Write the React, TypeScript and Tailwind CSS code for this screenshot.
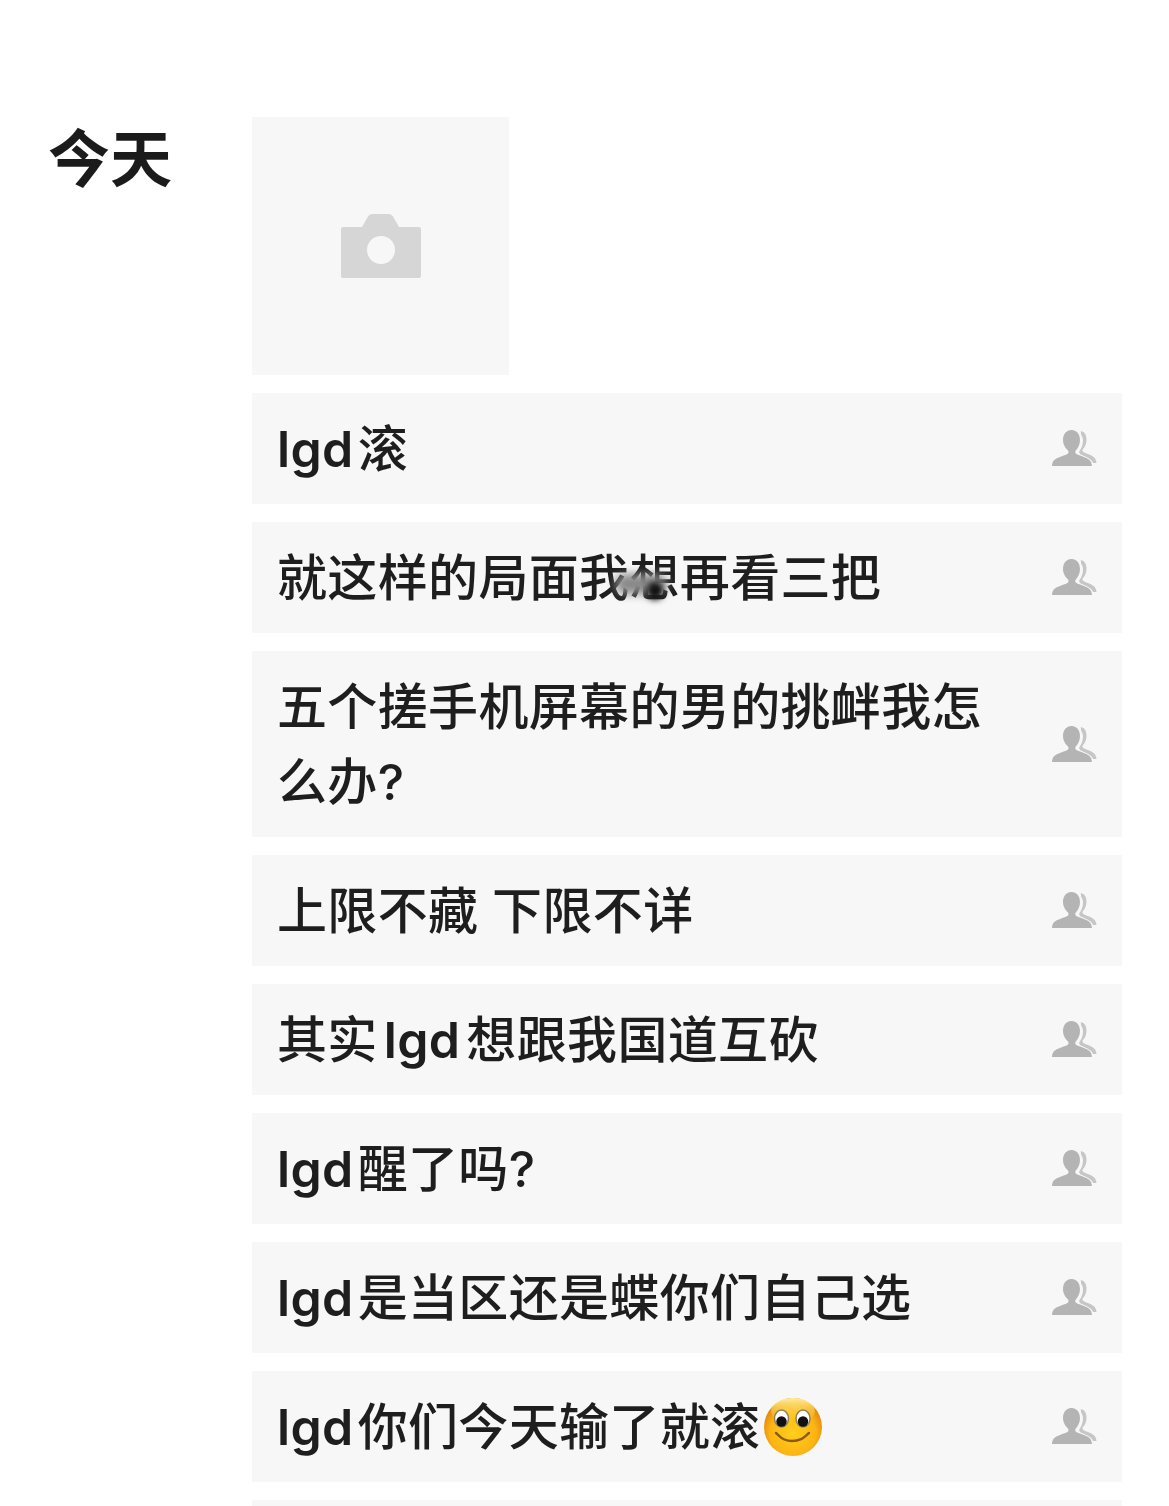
import type { ReactNode } from "react";

function CameraIcon() {
  return (
    <svg width="80" height="64" viewBox="0 0 80 64" className="block">
      <path
        d="M2 13h19l6-10.500q1.500-2.500 4-2.500h17q2.500 0 4 2.500l6 10.500h20q2 0 2 2v47q0 2-2 2H2q-2 0-2-2V15q0-2 2-2z"
        fill="#d6d6d6"
      />
      <circle cx="40" cy="36" r="14" fill="#f7f7f7" />
    </svg>
  );
}

function FriendsIcon() {
  return (
    <svg width="45" height="37" viewBox="0 0 45 37" className="block shrink-0">
      <path
        d="M28 1c4 0 6.500 3.500 6.500 8.500 0 4-1.500 7.500-3.500 9.500-.8 1-.6 2.500.6 3.200 3 1.600 9.500 3 11.500 6.300.8 1.300 1.200 3 1.400 4.500h-3.500c-1-3.600-5.500-5.500-10-7.500-2.500-1-4.500-2.400-3.500-4.500 2-3 3.500-6 3.500-10.500 0-2.500-.8-4.500-2-6 0-1.800-.2-2.600 0-3.500z"
        fill="#c6c6c6"
      />
      <path
        d="M19.500 0c5.200 0 8.500 4.300 8.500 10 0 4.500-2 8.300-4.200 10.500-1 1.300-.7 3 1 3.700 4 1.800 10.500 3.300 13.200 6.300 1.300 1.500 1.800 3.700 1.900 5.500H0c.1-2 .5-4 1.800-5.500 2.700-3 9.200-4.500 13.200-6.300 1.700-.8 2-2.400 1-3.700C13.500 18.300 11 14.500 11 10c0-5.700 3.300-10 8.500-10z"
        fill="#b4b4b4"
      />
    </svg>
  );
}

function SmileEmoji() {
  return (
    <svg width="60" height="60" viewBox="0 0 60 60" className="ml-[3px] inline-block align-[-12px]">
      <defs>
        <radialGradient id="smile-face" cx="50%" cy="60%" r="56%">
          <stop offset="0%" stopColor="#ffcf1c" />
          <stop offset="70%" stopColor="#fcb414" />
          <stop offset="100%" stopColor="#e3860f" />
        </radialGradient>
        <linearGradient id="smile-shine" x1="0" y1="0" x2="0" y2="1">
          <stop offset="0%" stopColor="#fff0a0" />
          <stop offset="100%" stopColor="#ffd21f" stopOpacity="0" />
        </linearGradient>
      </defs>
      <circle cx="30" cy="30" r="29" fill="url(#smile-face)" />
      <ellipse cx="30" cy="14" rx="22" ry="13" fill="url(#smile-shine)" />
      <ellipse cx="18.500" cy="21.500" rx="7" ry="8.500" fill="#fff" stroke="#8f8158" strokeWidth="1.500" />
      <ellipse cx="40" cy="21.500" rx="7" ry="8.500" fill="#fff" stroke="#8f8158" strokeWidth="1.500" />
      <circle cx="18.500" cy="24.500" r="5.200" fill="#111" />
      <circle cx="40" cy="24.500" r="5.200" fill="#111" />
      <path d="M13 36c3 2 5 8 16 8 10 0 13-5 17-8" fill="none" stroke="#8a5a12" strokeWidth="2.400" strokeLinecap="round" />
    </svg>
  );
}

function Row({ children }: { children: ReactNode }) {
  return (
    <div className="relative flex shrink-0 items-center justify-between bg-[#f7f7f7] py-[18px] pl-[25px] pr-[25px]">
      <div className="w-[713px] translate-y-px text-[50px] font-medium leading-[75px] tracking-[0.35px] text-[#1e1e1e]">
        {children}
      </div>
      <FriendsIcon />
    </div>
  );
}

// the source app leaves a thin gap around latin runs in chinese text
function Lgd({ lead = false }: { lead?: boolean }) {
  return <span className={lead ? "ml-[6px] mr-[6px] font-semibold" : "mr-[4px] font-semibold"}>lgd</span>;
}

export default function App() {
  return (
    <div
      className="flex h-[1506px] overflow-hidden bg-white pt-[117px]"
      style={{ fontFamily: '"Inter", "Noto Sans CJK SC", sans-serif' }}
    >
      <div className="w-[252px] shrink-0 pl-[48px] pt-[12px] text-[62px] font-bold leading-[62px] text-[#1b1b1b]">
        今天
      </div>
      <div className="flex w-[870px] flex-col gap-[18px]">
        <div className="flex h-[258px] w-[257px] shrink-0 items-center justify-center bg-[#f7f7f7]">
          <CameraIcon />
        </div>
        <Row>
          <Lgd />滚
        </Row>
        <Row>
          <span className="relative inline-block">
            就这样的局面我想再看三把
            <span className="absolute left-[338px] top-[33px] h-[20px] w-[52px] rounded-full bg-[#888] blur-[5px]" />
            <span className="absolute left-[370px] top-[41px] h-[18px] w-[16px] rounded-full bg-[#111] blur-[3px]" />
          </span>
        </Row>
        <Row>五个搓手机屏幕的男的挑衅我怎么办?</Row>
        <Row>上限不藏 下限不详</Row>
        <Row>
          其实
          <Lgd lead />
          想跟我国道互砍
        </Row>
        <Row>
          <Lgd />
          醒了吗?
        </Row>
        <Row>
          <Lgd />
          是当区还是蝶你们自己选
        </Row>
        <Row>
          <Lgd />
          你们今天输了就滚
          <SmileEmoji />
        </Row>
        <Row>{"\u00a0"}</Row>
      </div>
    </div>
  );
}
